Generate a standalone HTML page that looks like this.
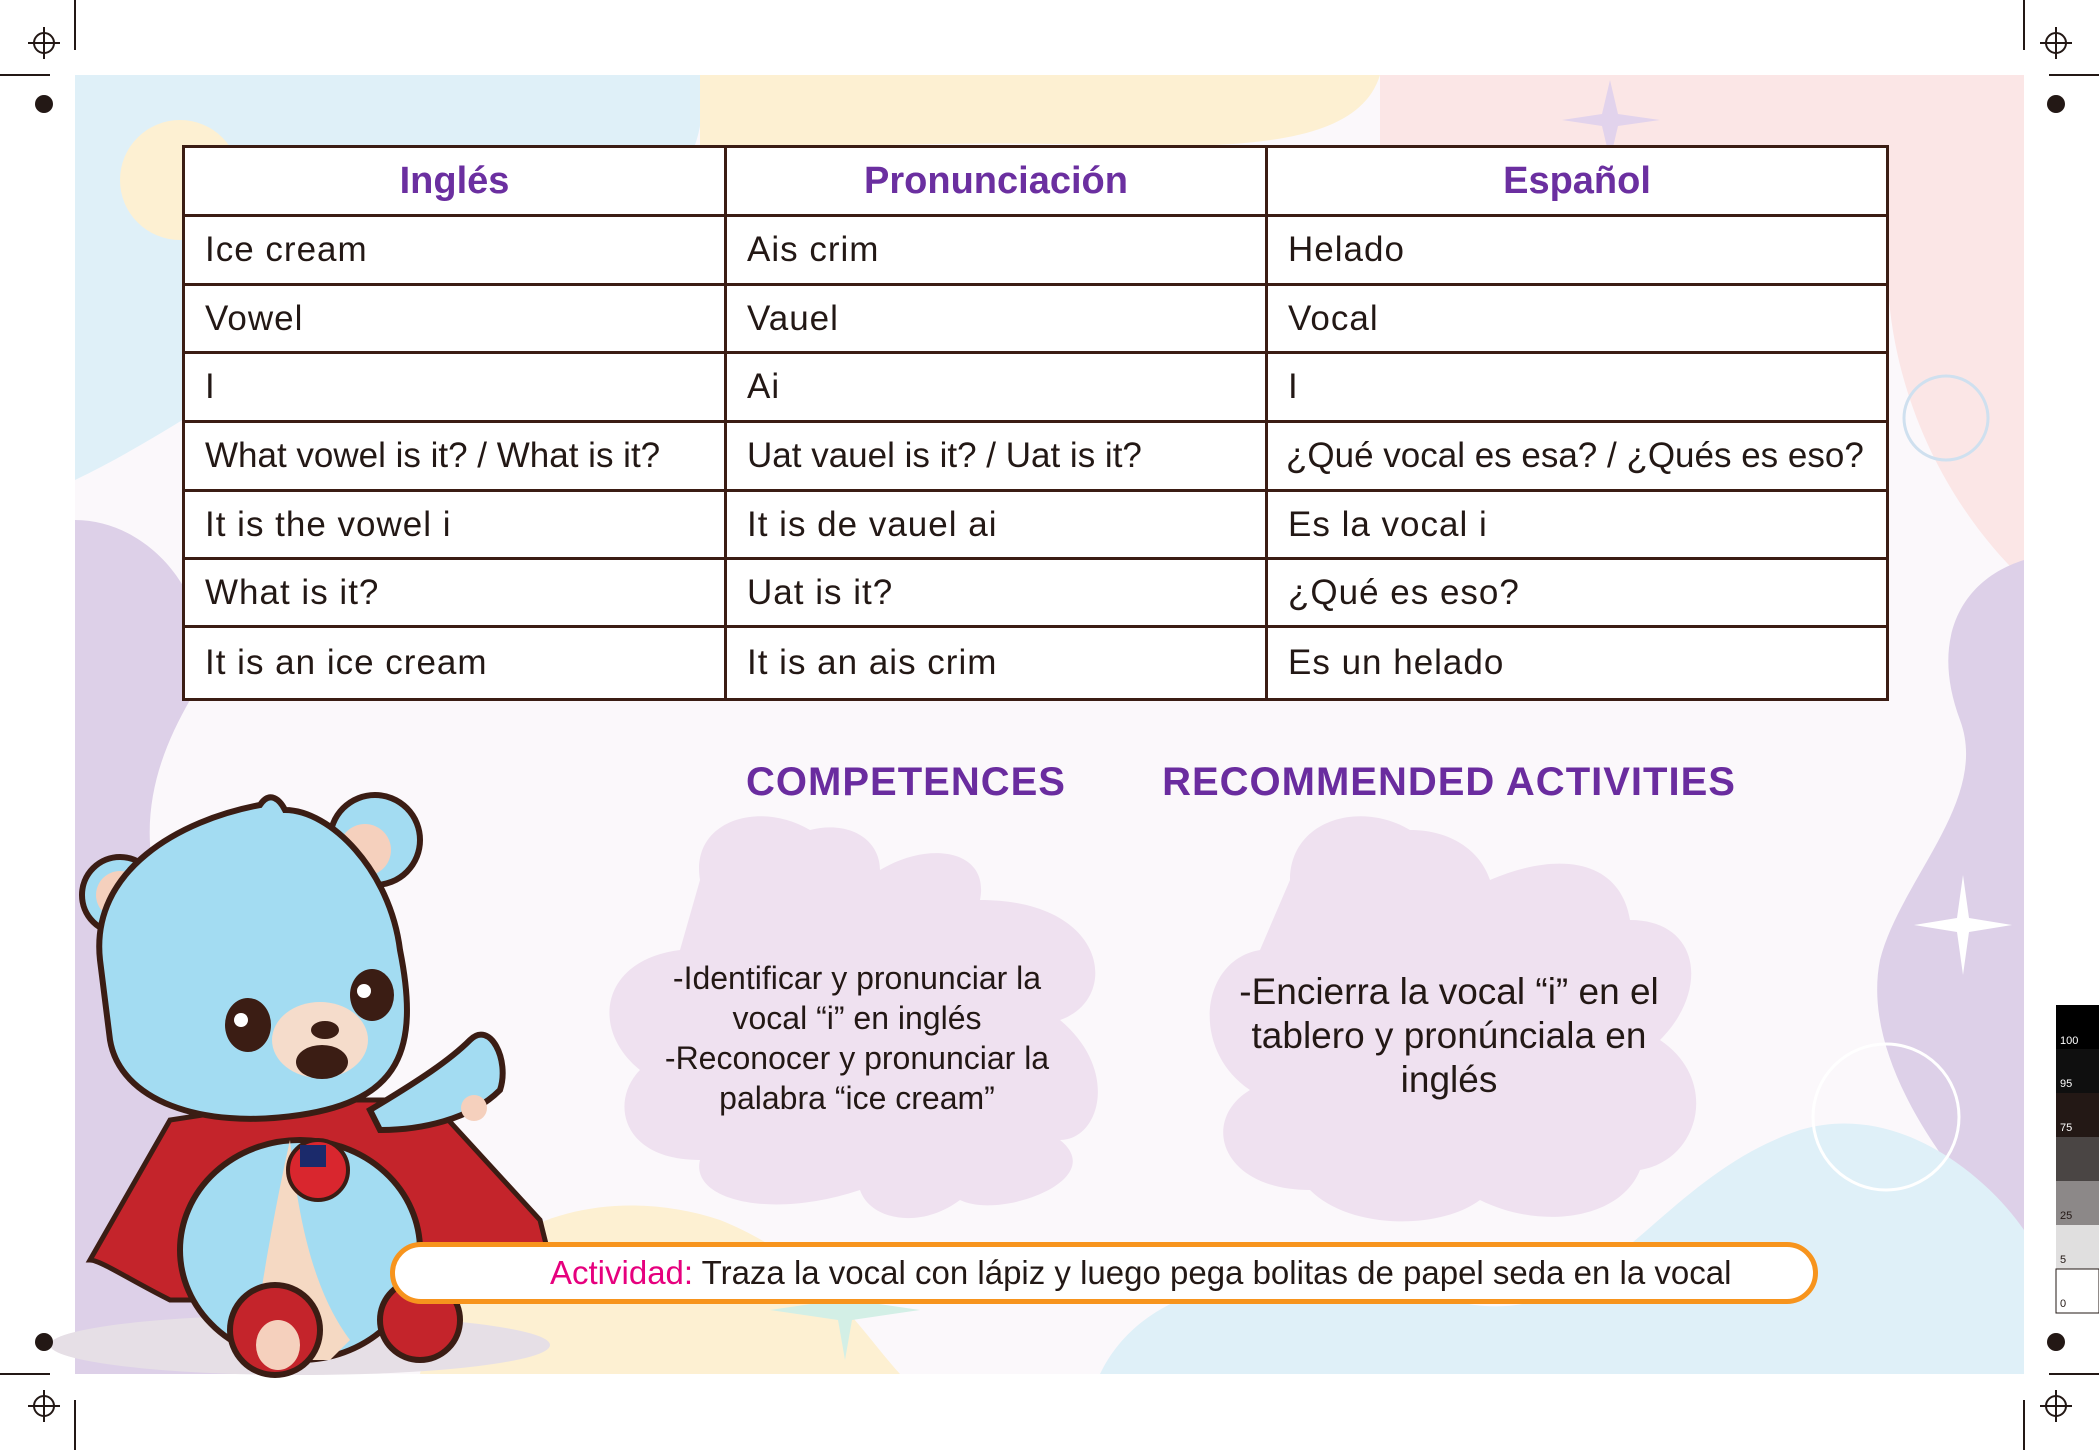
<!DOCTYPE html>
<html><head><meta charset="utf-8"><style>
*{margin:0;padding:0;box-sizing:border-box}
body{width:2099px;height:1450px;position:relative;background:#fff;overflow:hidden;font-family:"Liberation Sans",sans-serif;color:#231815}
svg.bg{position:absolute;left:0;top:0}
table{position:absolute;left:182px;top:145px;width:1707px;border-collapse:collapse;background:#fff}
td{border:3px solid #3b1d14;font-size:35px;padding:0 0 0 20px;letter-spacing:1px;vertical-align:middle}
th{border:3px solid #3b1d14;font-size:38px;color:#6b2fa0;font-weight:bold;height:69px}
.h{position:absolute;font-weight:bold;font-size:40px;color:#6a2c9f;letter-spacing:1px;transform:translateX(-50%);white-space:nowrap}
.ct{position:absolute;text-align:center;transform:translateX(-50%);white-space:nowrap}
.bar{position:absolute;left:390px;top:1242px;width:1428px;height:62px;border:5px solid #f7941d;border-radius:31px;background:#fff;font-size:33px;padding-left:155px;line-height:52px;white-space:nowrap;overflow:hidden}
.bar b{color:#e6007e;font-weight:normal}
</style></head><body>
<svg class="bg" width="2099" height="1450" viewBox="0 0 2099 1450">
<rect x="75" y="75" width="1949" height="1299" fill="#fbf8fb"/>
<path d="M75 75H700C720 200 600 260 420 300 300 330 200 420 75 480Z" fill="#dff0f8"/>
<path d="M700 75H1380C1360 140 1260 150 1100 145 950 140 820 150 700 145Z" fill="#fdf0d2"/>
<ellipse cx="180" cy="180" rx="60" ry="60" fill="#fdf0d2"/>
<path d="M1380 75H2024V580C1960 520 1900 420 1889 300 1880 200 1700 150 1380 145Z" fill="#fbe6e6"/>
<path d="M75 520C160 520 230 620 190 700 150 770 120 860 200 980 260 1080 300 1200 300 1374H75Z" fill="#ddd0e8"/>
<path d="M2024 560C1960 580 1930 640 1960 720 1990 800 1900 880 1880 960 1860 1060 1950 1180 2024 1250Z" fill="#ddd0e8"/>
<path d="M1100 1374C1150 1270 1300 1260 1450 1300 1600 1340 1650 1180 1800 1130 1900 1100 1990 1180 2024 1230V1374Z" fill="#dff0f8"/>
<path d="M420 1374C450 1220 600 1180 720 1220 820 1260 860 1330 900 1374Z" fill="#fdf0d2"/>
<ellipse cx="300" cy="1345" rx="250" ry="30" fill="#e6dfe6"/>
<circle cx="1946" cy="418" r="42" fill="none" stroke="#cfe0ef" stroke-width="3"/>
<circle cx="1886" cy="1117" r="73" fill="none" stroke="#fff" stroke-width="3"/>
<path d="M1963 875L1969 918 2012 925 1969 932 1963 975 1957 932 1914 925 1957 918Z" fill="#fff"/>
<path d="M1610 80L1618 114 1660 120 1618 126 1610 160 1602 126 1562 120 1602 114Z" fill="#e2d3ec"/>
<path d="M845 1262L852 1300 920 1310 852 1320 845 1360 838 1320 770 1310 838 1300Z" fill="#d3efe6"/>
<path d="M700 880C690 820 760 800 810 830 850 820 880 840 880 870 930 840 990 850 980 900 1110 900 1120 1000 1060 1020 1120 1070 1100 1140 1060 1140 1110 1180 1000 1220 960 1200 920 1230 870 1220 860 1190 770 1220 690 1200 700 1160 620 1160 610 1100 640 1070 590 1030 600 960 680 950 660 920 690 890Z" fill="#efe1f0"/>
<path d="M1290 880C1290 820 1360 800 1410 830 1450 830 1480 850 1490 880 1560 850 1620 860 1630 920 1700 920 1710 990 1660 1040 1720 1080 1700 1160 1640 1170 1620 1220 1540 1230 1480 1200 1440 1230 1350 1230 1310 1190 1220 1190 1200 1120 1250 1090 1190 1050 1200 960 1260 950 1250 910 1290 890Z" fill="#efe1f0"/>
<path d="M170 1300C130 1280 100 1260 90 1260L170 1120 300 1100 430 1100 540 1220 560 1300Z" fill="#c4242b" stroke="#3b1d14" stroke-width="5"/>
<ellipse cx="300" cy="1250" rx="120" ry="110" fill="#a3dcf2" stroke="#3b1d14" stroke-width="6"/>
<path d="M290 1140C300 1240 320 1300 350 1340L330 1360 250 1360C260 1300 270 1230 290 1140Z" fill="#f5d9c3"/>
<circle cx="275" cy="1330" r="45" fill="#c4242b" stroke="#3b1d14" stroke-width="6"/>
<ellipse cx="278" cy="1345" rx="22" ry="25" fill="#f5d0bd"/>
<circle cx="420" cy="1320" r="40" fill="#c4242b" stroke="#3b1d14" stroke-width="6"/>
<path d="M370 1110C420 1080 450 1060 470 1040 490 1020 510 1060 500 1090 470 1120 420 1130 380 1130Z" fill="#a3dcf2" stroke="#3b1d14" stroke-width="6"/>
<circle cx="474" cy="1108" r="13" fill="#f5d0bd"/>
<circle cx="120" cy="895" r="38" fill="#a3dcf2" stroke="#3b1d14" stroke-width="6"/>
<circle cx="120" cy="895" r="24" fill="#f5d0bd"/>
<circle cx="375" cy="840" r="45" fill="#a3dcf2" stroke="#3b1d14" stroke-width="6"/>
<circle cx="365" cy="850" r="26" fill="#f5d0bd"/>
<path d="M100 960C90 870 180 820 260 805 270 790 280 800 285 810 330 810 390 870 400 950 420 1050 400 1100 300 1115 200 1130 120 1100 110 1040Z" fill="#a3dcf2" stroke="#3b1d14" stroke-width="6"/>
<ellipse cx="320" cy="1040" rx="48" ry="38" fill="#f5dccb"/>
<ellipse cx="248" cy="1025" rx="23" ry="27" fill="#3b1d14"/><circle cx="241" cy="1020" r="7" fill="#fff"/>
<ellipse cx="372" cy="995" rx="22" ry="26" fill="#3b1d14"/><circle cx="364" cy="991" r="7" fill="#fff"/>
<ellipse cx="325" cy="1030" rx="14" ry="9" fill="#3b1d14"/>
<ellipse cx="322" cy="1062" rx="26" ry="17" fill="#3b1d14"/>
<circle cx="318" cy="1170" r="30" fill="#d9262e" stroke="#3b1d14" stroke-width="4"/>
<rect x="300" y="1145" width="26" height="22" fill="#1b2a6b"/>
<g stroke="#231815" stroke-width="2" fill="none">
<circle cx="44" cy="43" r="10"/><path d="M28 43H60M44 27V59M0 75H50M75 0V50"/>
<circle cx="2056" cy="43" r="10"/><path d="M2040 43H2072M2056 27V59M2049 75H2099M2024 0V50"/>
<circle cx="44" cy="1406" r="10"/><path d="M28 1406H60M44 1390V1422M0 1374H50M75 1400V1450"/>
<circle cx="2056" cy="1406" r="10"/><path d="M2040 1406H2072M2056 1390V1422M2049 1374H2099M2024 1400V1450"/>
</g>
<g fill="#231815"><circle cx="44" cy="104" r="9"/><circle cx="2056" cy="104" r="9"/><circle cx="44" cy="1342" r="9"/><circle cx="2056" cy="1342" r="9"/></g>
<rect x="2056" y="1005" width="43" height="44" fill="#000"/>
<rect x="2056" y="1049" width="43" height="44" fill="#0f0f0f"/>
<rect x="2056" y="1093" width="43" height="44" fill="#231815"/>
<rect x="2056" y="1137" width="43" height="44" fill="#4a4544"/>
<rect x="2056" y="1181" width="43" height="44" fill="#8c8888"/>
<rect x="2056" y="1225" width="43" height="44" fill="#e0dfdf"/>
<rect x="2056" y="1269" width="43" height="44" fill="#fff" stroke="#231815"/>
<g font-size="11" fill="#fff" font-family="Liberation Sans"><text x="2060" y="1044">100</text><text x="2060" y="1087">95</text><text x="2060" y="1131">75</text><text x="2060" y="1219" fill="#231815">25</text><text x="2060" y="1263" fill="#231815">5</text><text x="2060" y="1307" fill="#231815">0</text></g>
</svg>
<table>
<colgroup><col style="width:542px"><col style="width:541px"><col></colgroup>
<tr><th>Inglés</th><th>Pronunciación</th><th>Español</th></tr>
<tr style="height:69px"><td>Ice cream</td><td>Ais crim</td><td>Helado</td></tr>
<tr style="height:68px"><td>Vowel</td><td>Vauel</td><td>Vocal</td></tr>
<tr style="height:69px"><td>I</td><td>Ai</td><td>I</td></tr>
<tr style="height:69px"><td style="letter-spacing:0">What vowel is it? / What is it?</td><td style="letter-spacing:0">Uat vauel is it? / Uat is it?</td><td style="letter-spacing:0;padding-left:18px">¿Qué vocal es esa? / ¿Qués es eso?</td></tr>
<tr style="height:68px"><td>It is the vowel i</td><td>It is de vauel ai</td><td>Es la vocal i</td></tr>
<tr style="height:68px"><td>What is it?</td><td>Uat is it?</td><td>¿Qué es eso?</td></tr>
<tr style="height:73px"><td>It is an ice cream</td><td>It is an ais crim</td><td>Es un helado</td></tr>
</table>
<div class="h" style="left:906px;top:760px">COMPETENCES</div>
<div class="h" style="left:1449px;top:760px">RECOMMENDED ACTIVITIES</div>
<div class="ct" style="left:857px;top:958px;font-size:32px;line-height:40px">-Identificar y pronunciar la<br>vocal “i” en inglés<br>-Reconocer y pronunciar la<br>palabra “ice cream”</div>
<div class="ct" style="left:1449px;top:970px;font-size:37px;line-height:44px">-Encierra la vocal “i” en el<br>tablero y pronúnciala en<br>inglés</div>
<div class="bar"><b>Actividad:</b> Traza la vocal con lápiz y luego pega bolitas de papel seda en la vocal</div>
</body></html>
